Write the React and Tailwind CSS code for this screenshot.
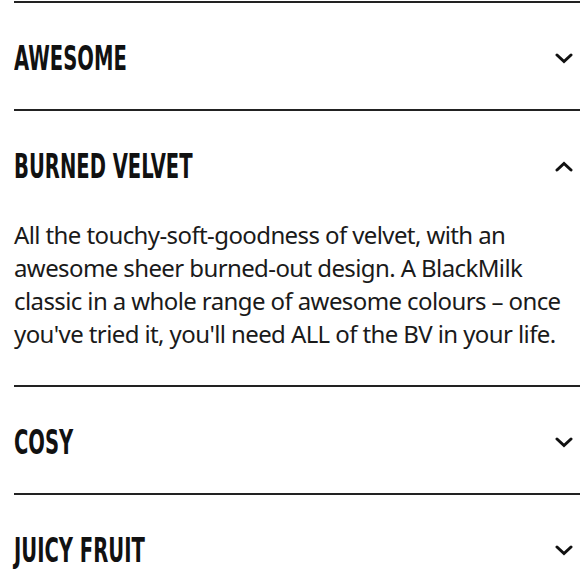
import React, { useState } from 'react';

const items = [
  { title: 'AWESOME', body: '' },
  {
    title: 'BURNED VELVET',
    body: "All the touchy-soft-goodness of velvet, with an awesome sheer burned-out design. A BlackMilk classic in a whole range of awesome colours – once you've tried it, you'll need ALL of the BV in your life.",
  },
  { title: 'COSY', body: '' },
  { title: 'JUICY FRUIT', body: '' },
];

const Chevron = ({ up }) => (
  <svg width="18" height="11" viewBox="0 0 18 11" className={up ? 'rotate-180' : ''}>
    <polyline points="2,2 9,8.5 16,2" fill="none" stroke="#111" strokeWidth="3" strokeLinecap="round" strokeLinejoin="miter" />
  </svg>
);

const App = () => {
  const [open, setOpen] = useState(1);

  return (
    <div className="min-h-screen bg-white pl-[14px] pt-px">
      {items.map((item, i) => (
        <div key={item.title} className="border-t-2 border-[#222]">
          <button
            onClick={() => setOpen(open === i ? -1 : i)}
            className="flex h-[106px] w-full items-center justify-between pr-[7px] pt-[4px] text-left"
          >
            <span
              className="origin-left scale-x-[0.64] text-[34px] font-bold leading-none text-[#111] whitespace-nowrap"
              style={{ fontFamily: '"DejaVu Sans Condensed", "DejaVu Sans", sans-serif', fontStretch: 'condensed' }}
            >
              {item.title}
            </span>
            <Chevron up={open === i} />
          </button>
          {open === i && item.body && (
            <p
              className="pb-[35px] pr-[8px] pt-[1px] text-[24px] leading-[33px] tracking-[-0.6px] text-[#1a1a1a]"
              style={{ fontFamily: '"Noto Sans", sans-serif' }}
            >
              {item.body}
            </p>
          )}
        </div>
      ))}
    </div>
  );
};

export default App;
